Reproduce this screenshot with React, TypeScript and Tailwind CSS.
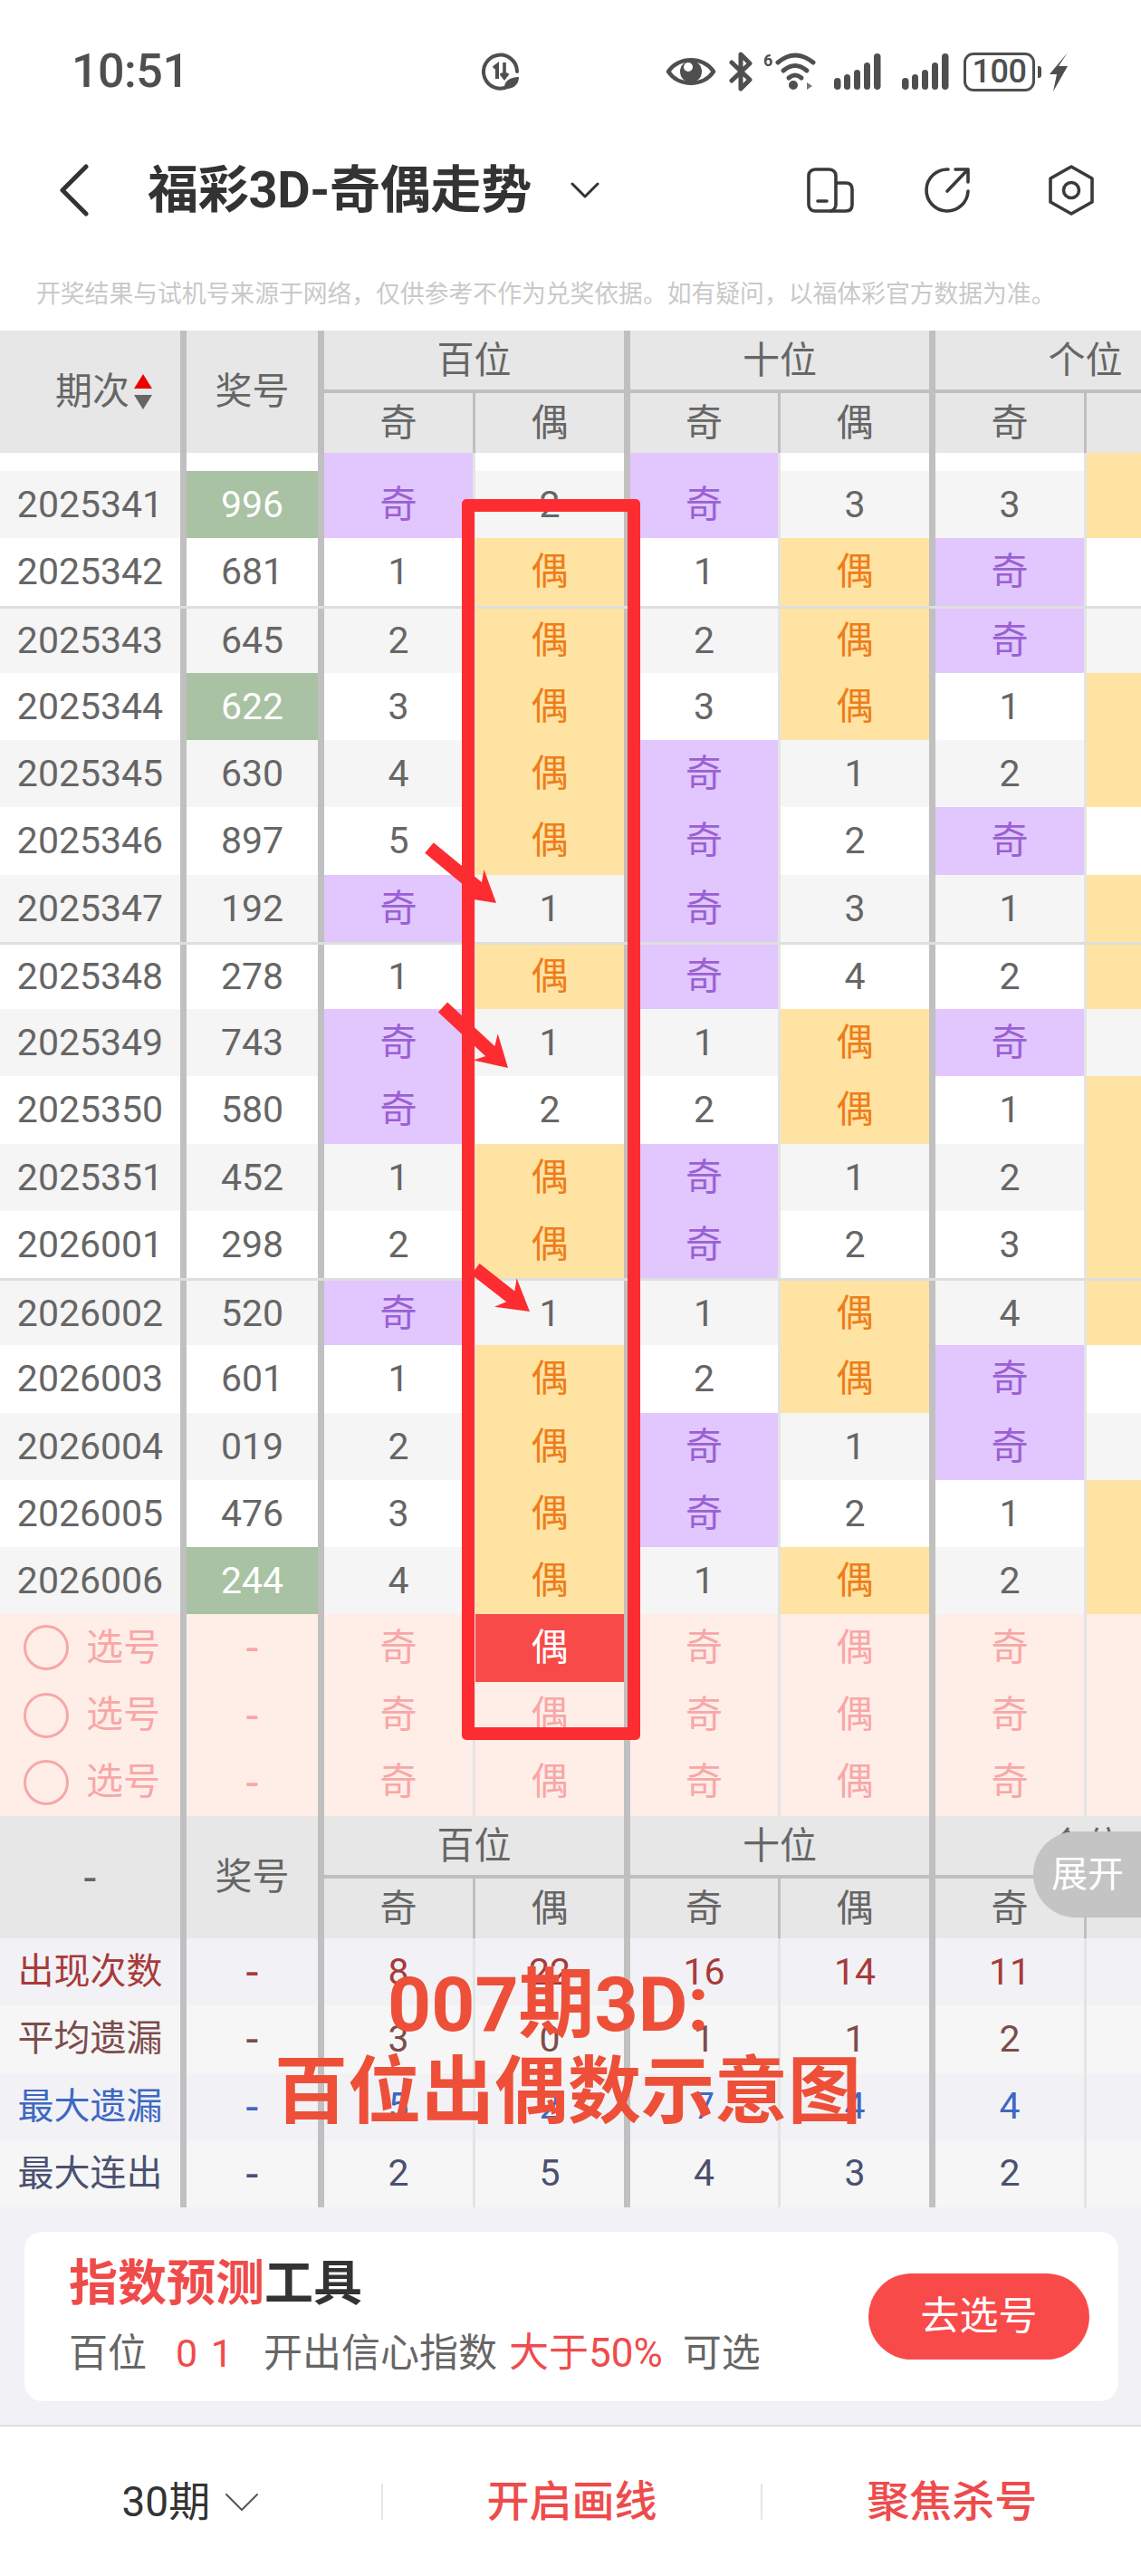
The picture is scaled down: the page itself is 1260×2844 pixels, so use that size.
import React from "react";

const GRID = "grid grid-cols-[206px_152px_167px_171px_166px_171px_167px_171px] w-[1371px]";

const dataBorders = [
  "border-r-[7px] border-[#c0c0c0]",
  "border-r-[7px] border-[#c0c0c0]",
  "border-r-[3px] border-[#e4e4e4]",
  "border-r-[7px] border-[#c0c0c0]",
  "border-r-[3px] border-[#e4e4e4]",
  "border-r-[7px] border-[#c0c0c0]",
  "border-r-[3px] border-[#e4e4e4]",
  "border-r-[7px] border-[#c0c0c0]",
];

type R = [string, string, string, string, string, string, string, string];

const rows: R[] = [
  ["2025341", "996", "奇", "2", "奇", "3", "3", "偶"],
  ["2025342", "681", "1", "偶", "1", "偶", "奇", "1"],
  ["2025343", "645", "2", "偶", "2", "偶", "奇", "2"],
  ["2025344", "622", "3", "偶", "3", "偶", "1", "偶"],
  ["2025345", "630", "4", "偶", "奇", "1", "2", "偶"],
  ["2025346", "897", "5", "偶", "奇", "2", "奇", "1"],
  ["2025347", "192", "奇", "1", "奇", "3", "1", "偶"],
  ["2025348", "278", "1", "偶", "奇", "4", "2", "偶"],
  ["2025349", "743", "奇", "1", "1", "偶", "奇", "1"],
  ["2025350", "580", "奇", "2", "2", "偶", "1", "偶"],
  ["2025351", "452", "1", "偶", "奇", "1", "2", "偶"],
  ["2026001", "298", "2", "偶", "奇", "2", "3", "偶"],
  ["2026002", "520", "奇", "1", "1", "偶", "4", "偶"],
  ["2026003", "601", "1", "偶", "2", "偶", "奇", "1"],
  ["2026004", "019", "2", "偶", "奇", "1", "奇", "2"],
  ["2026005", "476", "3", "偶", "奇", "2", "1", "偶"],
  ["2026006", "244", "4", "偶", "1", "偶", "2", "偶"],
];

const lucky = new Set(["996", "622", "244"]);
const lined = new Set([2, 7, 12]);

function cellTone(v: string) {
  if (v === "奇") return "bg-[#e1c7fd] text-[#9a60d4]";
  if (v === "偶") return "bg-[#fee3a2] text-[#ee7d1a]";
  return "";
}

function TopRow() {
  const tones = ["", "", "bg-[#e1c7fd]", "", "bg-[#e1c7fd]", "", "", "bg-[#fee3a2]"];
  return (
    <div className={`${GRID} h-[20px] bg-white`}>
      {tones.map((t, i) => (
        <div key={i} className={`${dataBorders[i]} ${t}`} />
      ))}
    </div>
  );
}

function DataRow({ r, i }: { r: R; i: number }) {
  const bg = i % 2 === 0 ? "bg-[#f5f5f5]" : "bg-white";
  const line = lined.has(i) ? "border-t-[3px] border-[#dedede]" : "";
  return (
    <div className={`${GRID} h-[74.25px] ${bg} ${line} text-[#666666]`}>
      {r.map((v, c) => {
        let tone = c >= 2 ? cellTone(v) : "";
        if (c === 1 && lucky.has(v)) tone = "bg-[#a8c2a3] text-white";
        return (
          <div key={c} className={`flex items-center justify-center pt-[1px] ${dataBorders[c]} ${tone}`}>
            {v}
          </div>
        );
      })}
    </div>
  );
}

function PickRow({ active }: { active?: boolean }) {
  const vals = ["奇", "偶", "奇", "偶", "奇", "偶"];
  return (
    <div className={`${GRID} h-[74.25px] bg-[#ffeee8] text-[#f8a7a7]`}>
      <div className={`flex items-center pl-[26px] gap-[19px] ${dataBorders[0]}`}>
        <span className="w-[50px] h-[50px] rounded-full border-[3px] border-[#f6a8a8]" />
        <span>选号</span>
      </div>
      <div className={`flex items-center justify-center text-[50px] ${dataBorders[1]}`}>-</div>
      {vals.map((v, i) => (
        <div
          key={i}
          className={`flex items-center justify-center ${dataBorders[i + 2]} ${
            active && i === 1 ? "bg-[#f94a4a] text-white" : ""
          }`}
        >
          {v}
        </div>
      ))}
    </div>
  );
}

function Head({ first }: { first: React.ReactNode }) {
  const th = "border-[#bfbfbf] bg-[#e7e7e7]";
  const sub = ["奇", "偶", "奇", "偶", "奇", "偶"];
  const subBorder = [
    "border-r-[3px]",
    "border-r-[7px]",
    "border-r-[3px]",
    "border-r-[7px]",
    "border-r-[3px]",
    "border-r-[7px]",
  ];
  return (
    <div className={`${GRID} grid-rows-[69px_66px] text-[#666666] bg-[#e7e7e7]`}>
      <div className={`row-span-2 flex items-center border-r-[7px] ${th}`}>{first}</div>
      <div className={`row-span-2 flex items-center justify-center border-r-[7px] ${th}`}>奖号</div>
      <div className={`col-span-2 flex items-center justify-center pt-[2px] border-r-[7px] border-b-[4px] ${th}`}>百位</div>
      <div className={`col-span-2 flex items-center justify-center pt-[2px] border-r-[7px] border-b-[4px] ${th}`}>十位</div>
      <div className={`col-span-2 flex items-center justify-center pt-[2px] border-r-[7px] border-b-[4px] ${th}`}>个位</div>
      {sub.map((s, i) => (
        <div key={i} className={`flex items-center justify-center ${subBorder[i]} ${th}`}>
          {s}
        </div>
      ))}
    </div>
  );
}

function StatRow({ label, tone, bg, vals }: { label: string; tone: string; bg: string; vals: string[] }) {
  return (
    <div className={`${GRID} h-[74.25px] ${bg} ${tone}`}>
      <div className={`flex items-center justify-center ${dataBorders[0]}`}>
        <span className="text-[40px]">{label}</span>
      </div>
      <div className={`flex items-center justify-center text-[50px] ${dataBorders[1]}`}>-</div>
      {vals.map((v, i) => (
        <div key={i} className={`flex items-center justify-center ${dataBorders[i + 2]}`}>
          {v}
        </div>
      ))}
      <div className={dataBorders[7]} />
    </div>
  );
}

function Signal() {
  return (
    <svg width="52" height="42" viewBox="0 0 52 42" fill="#4f4f4f">
      <rect x="0" y="28" width="7.5" height="13" rx="3.7" />
      <rect x="11" y="24" width="7" height="17" rx="3.5" />
      <rect x="22" y="19" width="7" height="22" rx="3.5" />
      <rect x="33" y="11" width="7" height="30" rx="3.5" />
      <rect x="44" y="1" width="7.5" height="40" rx="3.7" />
    </svg>
  );
}

function Arrow({ a, b }: { a: [number, number]; b: [number, number] }) {
  const dx = b[0] - a[0];
  const dy = b[1] - a[1];
  const L = Math.hypot(dx, dy);
  const ux = dx / L;
  const uy = dy / L;
  const nx = -uy;
  const ny = ux;
  const w = 7.5;
  const hw = 20;
  const hl = 34;
  const nk = 27;
  const p = (t: number, s: number) => `${a[0] + ux * t + nx * s},${a[1] + uy * t + ny * s}`;
  const pts = [p(0, w), p(L - nk, w), p(L - hl, hw), p(L, 0), p(L - hl, -hw), p(L - nk, -w), p(0, -w)].join(" ");
  return <polygon points={pts} fill="#fd2c30" />;
}

export default function App() {
  return (
    <div className="relative w-[1260px] h-[2844px] overflow-hidden bg-white font-['Roboto','Noto_Sans_CJK_SC',sans-serif] text-[41px] leading-none">
      {/* status bar */}
      <div className="flex h-[158px] items-center text-[#4f4f4f]">
        <span className="ml-[79px] w-[122px] text-[52px] font-medium tracking-[-0.5px] whitespace-nowrap">10:51</span>
        <svg className="ml-[331px]" width="42" height="42" viewBox="0 0 42 42" fill="none" stroke="#4f4f4f">
          <path d="M30 37 A18.5 18.5 0 1 1 39 21" strokeWidth="4" strokeLinecap="round" />
          <path d="M13 17 L17 14 V29" strokeWidth="4" />
          <path d="M25 11 V27 M21 23 L25 28 L29 23" strokeWidth="3.6" />
          <path d="M25 40 C24 32 31 27 41 27 C41 35 35 41 25 40 Z" fill="#4f4f4f" stroke="none" />
        </svg>
        <svg className="ml-[161px]" width="56" height="36" viewBox="0 0 56 36" fill="none">
          <path d="M3 18 C14 1 42 1 53 18 C42 35 14 35 3 18 Z" stroke="#4f4f4f" strokeWidth="4.5" strokeLinejoin="round" />
          <circle cx="28" cy="18" r="12" fill="#4f4f4f" />
          <circle cx="25" cy="13" r="5" fill="#fff" />
        </svg>
        <svg className="ml-[14px]" width="26" height="44" viewBox="0 0 26 44" fill="none" stroke="#4f4f4f" strokeWidth="5" strokeLinejoin="round" strokeLinecap="round">
          <path d="M3 12 L23 31 L13 41 V3 L23 13 L3 32" />
        </svg>
        <div className="relative ml-[12px] w-[57px] h-[42px]">
          <span className="absolute left-0 top-0 text-[18px] font-bold">6</span>
          <svg className="absolute left-[13px] top-0" width="45" height="42" viewBox="0 0 45 42" fill="none" stroke="#4f4f4f" strokeWidth="5" strokeLinecap="round">
            <path d="M3 11 Q22 -5 42 11" />
            <path d="M9 20 Q22 9 35 20" />
            <path d="M15 28 Q22 22 29 28" />
            <circle cx="20" cy="36" r="5" fill="#4f4f4f" stroke="none" />
            <path d="M35 33 L41 37 L35 41 Z" fill="#777777" stroke="none" />
          </svg>
        </div>
        <div className="ml-[21px]">
          <Signal />
        </div>
        <div className="ml-[23px]">
          <Signal />
        </div>
        <div className="ml-[16px] flex w-[79px] h-[43px] items-center justify-center rounded-[11px] border-[3px] border-[#4f4f4f] text-[36px] font-medium tracking-[-0.5px]">
          100
        </div>
        <div className="ml-[3px] w-[4px] h-[13px] rounded-r-[3px] bg-[#4f4f4f]" />
        <svg className="ml-[9px]" width="21" height="43" viewBox="0 0 21 43" fill="#4f4f4f">
          <path d="M20 0 L10 15 L20 15 L4 43 L8 24 L0 24 Z" />
        </svg>
      </div>

      {/* nav */}
      <div className="flex h-[104px] items-center text-[#333333]">
        <svg className="ml-[64px]" width="36" height="58" viewBox="0 0 36 58" fill="none" stroke="#333333" strokeWidth="5" strokeLinecap="round" strokeLinejoin="round">
          <path d="M31 3 L5 29 L31 55" />
        </svg>
        <span className="ml-[63px] w-[421px] text-[56px] font-bold tracking-[-0.3px] whitespace-nowrap">福彩3D-奇偶走势</span>
        <svg className="ml-[46px]" width="32" height="20" viewBox="0 0 32 20" fill="none" stroke="#333333" strokeWidth="3" strokeLinecap="round" strokeLinejoin="round">
          <path d="M2 3 L16 17 L30 3" />
        </svg>
        <svg className="ml-[229px]" width="52" height="50" viewBox="0 0 52 50" fill="none" stroke="#3a3a3a" strokeWidth="3.6" strokeLinejoin="round">
          <rect x="2" y="2" width="30" height="46" rx="7" />
          <path d="M32 17 H43 Q50 17 50 24 V41 Q50 48 43 48 H25" />
          <path d="M12 37 H22" strokeLinecap="round" />
        </svg>
        <svg className="ml-[77px]" width="52" height="52" viewBox="0 0 52 52" fill="none" stroke="#3a3a3a" strokeWidth="3.6" strokeLinecap="round" strokeLinejoin="round">
          <path d="M27 3 A23 23 0 1 0 49 27" />
          <path d="M26 27 L49 3 M35 3 H49 V17" />
        </svg>
        <svg className="ml-[85px]" width="52" height="56" viewBox="0 0 52 56" fill="none" stroke="#3a3a3a" strokeWidth="3.6" strokeLinejoin="round">
          <path d="M26 2 L49 15 V41 L26 54 L3 41 V15 Z" />
          <circle cx="26" cy="28" r="8.5" />
        </svg>
      </div>

      {/* notice */}
      <div className="flex h-[103px] items-center pt-[23px] pl-[40px] text-[26.8px] text-[#c9c9c9] whitespace-nowrap">
        {"开奖结果与试机号来源于网络\uFF0C仅供参考不作为兑奖依据。如有疑问\uFF0C以福体彩官方数据为准。"}
      </div>

      {/* table */}
      <div className="w-[1260px] overflow-hidden">
        <Head
          first={
            <div className="flex items-center pl-[61px] gap-[5px]">
              <span>期次</span>
              <div className="flex flex-col gap-[7px]">
                <span className="w-0 h-0 border-x-[10px] border-x-transparent border-b-[16px] border-b-[#ee0000]" />
                <span className="w-0 h-0 border-x-[10px] border-x-transparent border-t-[16px] border-t-[#666666]" />
              </div>
            </div>
          }
        />
        <TopRow />
        {rows.map((r, i) => (
          <DataRow key={r[0]} r={r} i={i} />
        ))}
        <PickRow active />
        <PickRow />
        <PickRow />
        <Head first={<div className="w-full text-center text-[50px]">-</div>} />
        <StatRow label="出现次数" tone="text-[#a83a3a]" bg="bg-[#f2f2f6]" vals={["8", "22", "16", "14", "11"]} />
        <StatRow label="平均遗漏" tone="text-[#7d4c4c]" bg="bg-[#f6f6f6]" vals={["3", "0", "1", "1", "2"]} />
        <StatRow label="最大遗漏" tone="text-[#3f68c2]" bg="bg-[#f2f2f6]" vals={["5", "2", "7", "4", "4"]} />
        <StatRow label="最大连出" tone="text-[#4b5170]" bg="bg-[#f6f6f6]" vals={["2", "5", "4", "3", "2"]} />
      </div>

      {/* tool card */}
      <div className="h-[240px] bg-[#f2f2f6] pt-[27px] pl-[27px] pr-[25px]">
        <div className="flex h-[187px] items-center justify-between rounded-[20px] bg-white pl-[49px] pr-[32px]">
          <div className="flex flex-col gap-[21px]">
            <div className="text-[54px] leading-[60px] font-bold text-[#333333]">
              <span className="text-[#f04b4b]">指数预测</span>工具
            </div>
            <div className="flex items-center text-[43px] leading-[50px] text-[#666666] whitespace-nowrap">
              <span>百位</span>
              <span className="ml-[32px] tracking-[2px] text-[#ee4c4c]">0 1</span>
              <span className="ml-[32px]">开出信心指数</span>
              <span className="ml-[13px] text-[44px] text-[#ee4c4c]">大于50%</span>
              <span className="ml-[22px]">可选</span>
            </div>
          </div>
          <div className="flex w-[244px] h-[95px] items-center justify-center rounded-full bg-[#f94a4a] text-[43px] text-white">
            去选号
          </div>
        </div>
      </div>

      {/* footer */}
      <div className="flex h-[167px] items-center border-t-[2px] border-[#e0e0e0] bg-white">
        <div className="flex w-[421px] items-center justify-center gap-[16px] text-[46px] text-[#333333]">
          <span>30期</span>
          <svg width="38" height="22" viewBox="0 0 38 22" fill="none" stroke="#555555" strokeWidth="2" strokeLinecap="round" strokeLinejoin="round">
            <path d="M2 3 L19 20 L36 3" />
          </svg>
        </div>
        <div className="w-[2px] h-[40px] bg-[#e6e6e6]" />
        <div className="flex w-[418px] justify-center text-[47px] font-medium text-[#ee4b4b]">开启画线</div>
        <div className="w-[2px] h-[40px] bg-[#e6e6e6]" />
        <div className="flex w-[418px] justify-center text-[47px] font-medium text-[#ee4b4b]">聚焦杀号</div>
      </div>

      {/* annotations over the picture */}
      <div className="absolute left-[510px] top-[551px] w-[197px] h-[1370px] rounded-[5px] border-[14px] border-[#fd2c30]" />
      <svg className="absolute left-0 top-0" width="1260" height="2844" viewBox="0 0 1260 2844">
        <Arrow a={[474, 936]} b={[548, 997]} />
        <Arrow a={[489, 1112]} b={[561, 1179]} />
        <Arrow a={[525, 1401]} b={[585, 1448]} />
      </svg>
      <div className="absolute left-[428px] top-[2164px] text-[84px] leading-[100px] font-bold text-[#ee4f38] whitespace-nowrap">
        007期3D:
      </div>
      <div className="absolute left-[303px] top-[2260px] text-[81px] leading-[100px] font-bold text-[#ee4f38] whitespace-nowrap">
        百位出偶数示意图
      </div>
      <div className="absolute right-0 top-[2022px] flex w-[119px] h-[95px] items-center pl-[20px] rounded-l-[47px] bg-[#c4c4c4] text-[40px] text-white whitespace-nowrap">
        展开
      </div>
    </div>
  );
}
